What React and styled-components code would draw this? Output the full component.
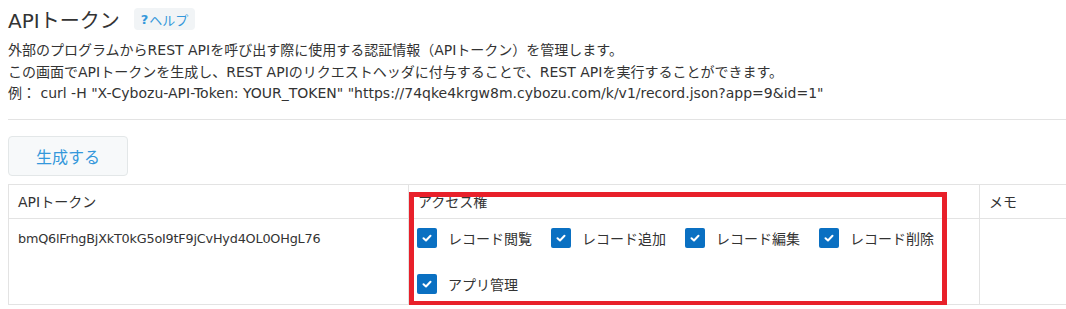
import React from 'react';
import styled, { createGlobalStyle } from 'styled-components';

const GlobalStyle = createGlobalStyle`
  body {
    margin: 0;
    background: #fff;
    font-family: "DejaVu Sans", "Noto Sans CJK JP", sans-serif;
    color: #333;
    overflow: hidden;
  }
`;

const permissions = [
  'レコード閲覧',
  'レコード追加',
  'レコード編集',
  'レコード削除',
  'アプリ管理',
];

const Check = () => (
  <CheckBox>
    <svg width="12" height="12" viewBox="0 0 12 12">
      <path d="M2.5 6.2 L5 8.5 L9.5 3.8" fill="none" stroke="#fff" strokeWidth="2" strokeLinecap="round" strokeLinejoin="round" />
    </svg>
  </CheckBox>
);

const App = () => {
  return (
    <Page>
      <GlobalStyle />
      <TitleRow>
        <Title>APIトークン</Title>
        <HelpBadge><b>?</b>ヘルプ</HelpBadge>
      </TitleRow>

      <Description>
        <p>外部のプログラムからREST APIを呼び出す際に使用する認証情報（APIトークン）を管理します。</p>
        <p>この画面でAPIトークンを生成し、REST APIのリクエストヘッダに付与することで、REST APIを実行することができます。</p>
        <p>例： curl -H "X-Cybozu-API-Token: YOUR_TOKEN" "https://74qke4krgw8m.cybozu.com/k/v1/record.json?app=9&amp;id=1"</p>
      </Description>

      <Divider />

      <GenerateButton>生成する</GenerateButton>

      <TableWrap>
        <Table>
          <colgroup>
            <col style={{ width: 400 }} />
            <col style={{ width: 571 }} />
            <col />
          </colgroup>
          <thead>
            <tr>
              <Th>APIトークン</Th>
              <Th>アクセス権</Th>
              <Th>メモ</Th>
            </tr>
          </thead>
          <tbody>
            <tr>
              <Td>
                <Token>bmQ6lFrhgBjXkT0kG5oI9tF9jCvHyd4OL0OHgL76</Token>
              </Td>
              <Td>
                <PermList>
                  {permissions.map((p) => (
                    <PermItem key={p}>
                      <Check />
                      <span>{p}</span>
                    </PermItem>
                  ))}
                </PermList>
              </Td>
              <Td />
            </tr>
          </tbody>
        </Table>
        <Highlight />
      </TableWrap>
    </Page>
  );
};

const Page = styled.div`
  padding: 0 0 0 8px;
  width: 1100px;
`;

const TitleRow = styled.div`
  display: flex;
  align-items: center;
  height: 36px;
  padding-top: 1px;
`;

const Title = styled.h1`
  margin: 0;
  font-size: 20px;
  font-weight: 400;
  color: #333;
`;

const HelpBadge = styled.span`
  margin-left: 14px;
  height: 22px;
  padding: 0 7px;
  display: flex;
  align-items: center;
  background: #f1f4f6;
  border-radius: 4px;
  color: #3498db;
  font-size: 13px;
  b {
    margin-right: 1px;
  }
`;

const Description = styled.div`
  margin-top: 3px;
  font-size: 14px;
  line-height: 21.5px;
  p {
    margin: 0;
  }
`;

const Divider = styled.hr`
  margin: 14px 0 0;
  border: none;
  border-top: 1px solid #e3e3e3;
`;

const GenerateButton = styled.button`
  display: block;
  margin-top: 16px;
  width: 120px;
  height: 40px;
  background: #f7f9fa;
  border: 1px solid #e3e7e8;
  border-radius: 4px;
  color: #3498db;
  font-family: inherit;
  font-size: 16px;
`;

const TableWrap = styled.div`
  position: relative;
  margin-top: 8px;
`;

const Table = styled.table`
  border-collapse: collapse;
  table-layout: fixed;
  width: 1100px;
  font-size: 14px;
`;

const Th = styled.th`
  box-sizing: border-box;
  height: 34px;
  padding: 0 9px;
  border: 1px solid #e3e3e3;
  text-align: left;
  font-weight: 400;
  color: #333;
`;

const Td = styled.td`
  box-sizing: border-box;
  height: 86px;
  padding: 8px 8px;
  border: 1px solid #e3e3e3;
  vertical-align: top;
`;

const Token = styled.div`
  margin-top: 4px;
  padding-left: 1px;
  font-size: 12.8px;
  letter-spacing: -0.2px;
  color: #333;
`;

const PermList = styled.div`
  display: flex;
  flex-wrap: wrap;
  row-gap: 26px;
  padding-top: 1px;
`;

const PermItem = styled.label`
  display: flex;
  align-items: center;
  width: 134px;
  gap: 11px;
  font-size: 14px;
  white-space: nowrap;
`;

const CheckBox = styled.span`
  width: 20px;
  height: 20px;
  flex: none;
  border-radius: 2px;
  background: #0a70c2;
  display: flex;
  align-items: center;
  justify-content: center;
`;

const Highlight = styled.div`
  position: absolute;
  left: 401px;
  top: 8px;
  width: 538px;
  height: 114px;
  box-sizing: border-box;
  border: 5px solid #e8202a;
  pointer-events: none;
`;

export default App;
